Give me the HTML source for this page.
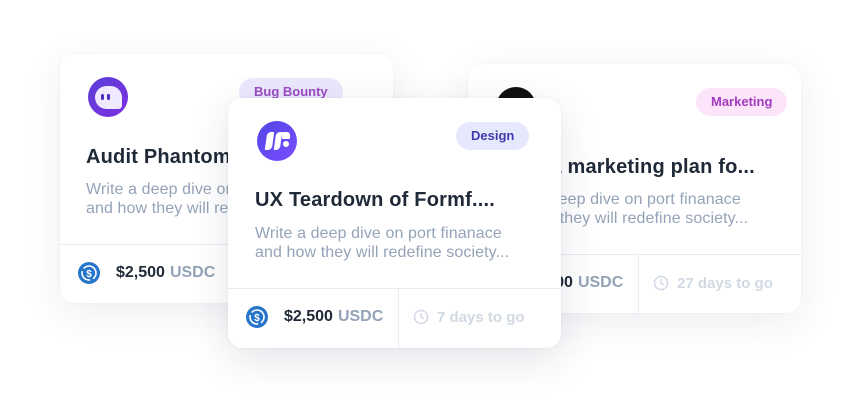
<!DOCTYPE html>
<html><head><meta charset="utf-8"><style>
*{margin:0;padding:0;box-sizing:border-box}
body{width:860px;height:412px;background:#fff;position:relative;overflow:hidden;font-family:"Liberation Sans",Arial,sans-serif}
.card{position:absolute;width:333px;height:249px;background:#fff;border-radius:14px;box-shadow:0 10px 40px rgba(30,40,80,0.08),0 0 2px rgba(30,40,80,0.05)}
.logo{position:absolute;left:28px;top:23px;width:40px;height:40px;border-radius:50%}
.tag{position:absolute;top:24px;height:28px;border-radius:14px;font-size:13px;font-weight:bold;line-height:28px;padding:0 15px}
.title{position:absolute;left:26px;top:90px;font-size:20px;font-weight:bold;color:#1f2937;white-space:nowrap;letter-spacing:0.2px}
.desc{position:absolute;left:26px;top:125px;font-size:16px;letter-spacing:0.1px;line-height:19px;color:#94a3b8;white-space:nowrap}
.div{position:absolute;left:0;right:0;top:190px;border-top:1px solid #e8edf3}
.vdiv{position:absolute;left:170px;top:190px;bottom:0;border-left:1px solid #e8edf3}
.amt{position:absolute;left:18px;top:208px;display:flex;align-items:center;font-size:16px;font-weight:bold;color:#1f2937}
.amt span{color:#94a3b8;margin-left:5px}
.coin{width:22px;height:22px;margin-right:16px}
.time{position:absolute;left:185px;top:208px;display:flex;align-items:center;font-size:15px;font-weight:bold;color:#d1d9e3;height:22px}
</style></head><body>
<svg width="0" height="0" style="position:absolute"><defs>
<symbol id="usdc" viewBox="0 0 22 22"><circle cx="11" cy="11" r="11" fill="#2775ca"/><circle cx="11" cy="11" r="7" fill="none" stroke="#fff" stroke-width="1.6" stroke-dasharray="14 3" transform="rotate(-60 11 11)"/><text x="11" y="15" text-anchor="middle" font-size="10" font-weight="bold" fill="#fff" font-family="Liberation Sans">$</text></symbol>
<symbol id="clock" viewBox="0 0 16 16"><circle cx="8" cy="8" r="6.5" fill="none" stroke="#d1d9e3" stroke-width="1.5"/><path d="M8 4.5V8l2.2 1.5" fill="none" stroke="#d1d9e3" stroke-width="1.5" stroke-linecap="round"/></symbol>
</defs></svg>

<div class="card" style="left:60px;top:54px;">
  <div class="logo" style="background:linear-gradient(135deg,#5b3fd6,#7b2fe0);"><div style="position:absolute;left:7px;top:9px;width:27px;height:23px;background:#efeaff;border-radius:13px 13px 4px 13px"></div><div style="position:absolute;left:13px;top:17px;width:3px;height:6px;background:#4b2fc0;border-radius:2px"></div><div style="position:absolute;left:19px;top:17px;width:3px;height:6px;background:#4b2fc0;border-radius:2px"></div></div>
  <div class="tag" style="left:179px;background:#ebe8fd;color:#9b4cc4">Bug Bounty</div>
  <div class="title" style="top:92px">Audit Phantom wallet</div>
  <div class="desc" style="top:126px">Write a deep dive on port finanace<br>and how they will redefine society...</div>
  <div class="div"></div>
  <div class="amt"><svg class="coin"><use href="#usdc"/></svg>$2,500<span>USDC</span></div>
</div>

<div class="card" style="left:468px;top:64px;">
  <div class="logo" style="background:#111;"></div>
  <div class="tag" style="left:228px;background:#fce4fb;color:#a43bbd">Marketing</div>
  <div class="title" style="top:92px">Write a marketing plan fo...</div>
  <div class="desc" style="top:126px">Write a deep dive on port finanace<br>and how they will redefine society...</div>
  <div class="div"></div><div class="vdiv"></div>
  <div class="amt"><svg class="coin"><use href="#usdc"/></svg>$2,500<span>USDC</span></div>
  <div class="time"><svg width="16" height="16" style="margin-right:8px"><use href="#clock"/></svg>27 days to go</div>
</div>

<div class="card" style="left:228px;top:98px;height:250px;box-shadow:0 12px 40px rgba(30,40,80,0.12),0 0 3px rgba(30,40,80,0.06)">
  <div class="logo" style="left:29px;top:23px;background:linear-gradient(135deg,#4f46e5,#7c4dff);">
    <div style="position:absolute;left:9px;top:11px;width:7px;height:18px;background:#fff;border-radius:4px 1px 4px 1px;transform:skewX(-8deg)"></div>
    <div style="position:absolute;left:18px;top:11px;width:6px;height:18px;background:#fff;border-radius:4px 1px 4px 1px;transform:skewX(-8deg)"></div>
    <div style="position:absolute;left:25px;top:11px;width:8px;height:7px;background:#fff;border-radius:1px 3px 1px 1px"></div>
    <div style="position:absolute;left:26px;top:20px;width:6px;height:6px;background:#fff;border-radius:50%"></div>
  </div>
  <div class="tag" style="left:228px;background:#e6e8fd;color:#3f3ab0">Design</div>
  <div class="title" style="left:27px;top:91px">UX Teardown of Formf....</div>
  <div class="desc" style="left:27px;top:126px">Write a deep dive on port finanace<br>and how they will redefine society...</div>
  <div class="div"></div><div class="vdiv"></div>
  <div class="amt"><svg class="coin"><use href="#usdc"/></svg>$2,500<span>USDC</span></div>
  <div class="time"><svg width="16" height="16" style="margin-right:8px"><use href="#clock"/></svg>7 days to go</div>
</div>
</body></html>
